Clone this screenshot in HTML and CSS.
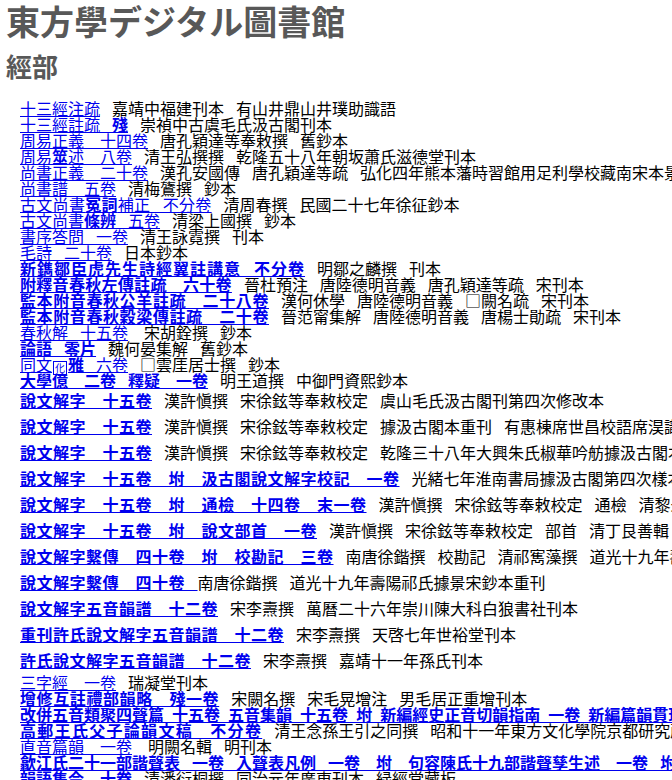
FILE: index.html
```html
<!DOCTYPE html>
<html lang="ja">
<head>
<meta charset="utf-8">
<title>東方學デジタル圖書館</title>
<link rel="stylesheet" href="styles.css">
</head>
<body>
<h1 class="site-title">東方學デジタル圖書館</h1>
<h2 class="section-title">經部</h2>
<div class="book-list">
  <div class="book"><a href="#">十三經注疏</a> <span class="note">嘉靖中福建刊本 有山井鼎山井璞助識語</span></div>
  <div class="book"><a href="#">十三經註疏 <span class="fb">殘</span></a> <span class="note">崇禎中古虞毛氏汲古閣刊本</span></div>
  <div class="book"><a href="#">周易正義　十四卷</a> <span class="note">唐孔穎達等奉敕撰 舊鈔本</span></div>
  <div class="book"><a href="#">周易<span class="fb">筮</span>述　八卷</a> <span class="note">清王弘撰撰 乾隆五十八年朝坂蕭氏滋德堂刊本</span></div>
  <div class="book"><a href="#">尚書正義　二十卷</a> <span class="note">漢孔安國傳 唐孔穎達等疏 弘化四年熊本藩時習館用足利學校藏南宋本景刊</span></div>
  <div class="book"><a href="#">尚書譜　五卷</a> <span class="note">清梅鷟撰 鈔本</span></div>
  <div class="book"><a href="#" class="ls-q">古文尚書<span class="fb">冤詞</span>補正 不分卷</a> <span class="note">清周春撰 民國二十七年徐征鈔本</span></div>
  <div class="book"><a href="#">古文尚書<span class="fb">條辨</span> 五卷</a> <span class="note">清梁上國撰 鈔本</span></div>
  <div class="book"><a href="#">書序答問 一卷</a> <span class="note">清王詠霓撰 刊本</span></div>
  <div class="book"><a href="#">毛詩 二十卷</a> <span class="note">日本鈔本</span></div>
  <div class="book"><a href="#" class="heavy ls-1">新鐫鄒臣虎先生詩經翼註講意 不分卷</a> <span class="note">明鄒之麟撰 刊本</span></div>
  <div class="book"><a href="#" class="heavy ls-q">附釋音春秋左傳註疏　六十卷</a> <span class="note">晉杜預注 唐陸德明音義 唐孔穎達等疏 宋刊本</span></div>
  <div class="book"><a href="#" class="heavy ls-h">監本附音春秋公羊註疏　二十八卷</a> <span class="note">漢何休學 唐陸德明音義 □闕名疏 宋刊本</span></div>
  <div class="book"><a href="#" class="heavy ls-h">監本附音春秋穀梁傳註疏　二十卷</a> <span class="note">晉范甯集解 唐陸德明音義 唐楊士勛疏 宋刊本</span></div>
  <div class="book"><a href="#">春秋解 十五卷</a>　<span class="note">宋胡銓撰 鈔本</span></div>
  <div class="book"><a href="#" class="heavy">論語 零片</a> <span class="note">魏何晏集解 舊鈔本</span></div>
  <div class="book"><a href="#">同文<span class="boxed">化</span><span class="fb">雅</span> 六卷</a> <span class="note">□雲厓居士撰 鈔本</span></div>
  <div class="book"><a href="#" class="heavy">大學億　二卷 釋疑　一卷</a> <span class="note">明王道撰 中御門資熙鈔本</span></div>

  <div class="book tall"><a href="#">說文解字　十五卷</a> <span class="note">漢許愼撰 宋徐鉉等奉敕校定 虞山毛氏汲古閣刊第四次修改本</span></div>
  <div class="book tall"><a href="#">說文解字　十五卷</a> <span class="note">漢許愼撰 宋徐鉉等奉敕校定 據汲古閣本重刊 有惠棟席世昌校語席淏識語</span></div>
  <div class="book tall"><a href="#">說文解字　十五卷</a> <span class="note">漢許愼撰 宋徐鉉等奉敕校定 乾隆三十八年大興朱氏椒華吟舫據汲古閣本重刊</span></div>
  <div class="book tall"><a href="#">說文解字　十五卷　坿　汲古閣說文解字校記　一卷</a> <span class="note">光緒七年淮南書局據汲古閣第四次樣本重刊</span></div>
  <div class="book tall"><a href="#">說文解字　十五卷　坿　通檢　十四卷　末一卷</a> <span class="note">漢許愼撰 宋徐鉉等奉敕校定 通檢 清黎永椿撰</span></div>
  <div class="book tall"><a href="#">說文解字　十五卷　坿　說文部首　一卷</a> <span class="note">漢許愼撰 宋徐鉉等奉敕校定 部首 清丁艮善輯 光緒</span></div>
  <div class="book tall"><a href="#">說文解字繫傳　四十卷　坿　校勘記　三卷</a> <span class="note">南唐徐鍇撰 校勘記 清祁寯藻撰 道光十九年壽陽祁氏刊本</span></div>
  <div class="book tall"><a href="#">說文解字繫傳　四十卷 </a><span class="note">南唐徐鍇撰 道光十九年壽陽祁氏據景宋鈔本重刊</span></div>
  <div class="book tall"><a href="#">說文解字五音韻譜　十二卷</a> <span class="note">宋李燾撰 萬曆二十六年崇川陳大科白狼書社刊本</span></div>
  <div class="book tall"><a href="#">重刊許氏說文解字五音韻譜　十二卷</a> <span class="note">宋李燾撰 天啓七年世裕堂刊本</span></div>
  <div class="book tall"><a href="#">許氏說文解字五音韻譜　十二卷</a> <span class="note">宋李燾撰 嘉靖十一年孫氏刊本</span></div>

  <div class="book"><a href="#">三字經　一卷</a> <span class="note">瑞凝堂刊本</span></div>
  <div class="book"><a href="#" class="heavy ls-h">增修互註禮部韻略　殘一卷</a> <span class="note">宋闕名撰 宋毛晃增注 男毛居正重增刊本</span></div>
  <div class="book tight"><a href="#" class="heavy">改併五音類聚四聲篇 十五卷 五音集韻 十五卷 坿 新編經史正音切韻指南 一卷 新編篇韻貫珠集 八卷</a></div>
  <div class="book"><a href="#" class="heavy ls-w">高郵王氏父子論韻文稿　不分卷</a> <span class="note">清王念孫王引之同撰 昭和十一年東方文化學院京都研究所影印本</span></div>
  <div class="book"><a href="#">直音篇韻　一卷</a>　<span class="note">明闕名輯 明刊本</span></div>
  <div class="book"><a href="#" class="heavy">歙江氏二十一部諧聲表 一卷 入聲表凡例 一卷　坿　句容陳氏十九部諧聲孳生述　一卷 坿 四聲切韻表　一卷</a></div>
  <div class="book"><a href="#" class="heavy">韻語集令　十卷</a> <span class="note">清潘衍桐撰 同治元年廣東刊本 緑經堂藏板</span></div>
</div>
</body>
</html>
```

FILE: styles.css
```css
html, body {
  margin: 0;
  padding: 0;
  overflow: hidden;
  background: #ffffff;
}

body {
  width: 672px;
  height: 780px;
  font-family: "Noto Sans CJK JP", "Noto Sans CJK SC", sans-serif;
  color: #000000;
}

.site-title {
  margin: 4px 0 0 6px;
  font-size: 34px;
  line-height: 34px;
  font-weight: 700;
  color: #585858;
  white-space: nowrap;
}

.section-title {
  margin: 15px 0 0 6px;
  font-size: 26px;
  line-height: 26px;
  font-weight: 700;
  color: #585858;
}

.book-list {
  margin-top: 21px;
  padding-left: 20px;
}

.book {
  height: 16px;
  font-size: 16px;
  line-height: 16px;
  white-space: nowrap;
  word-spacing: 8.4px;
}

.book a {
  color: #0000ee;
  text-decoration: underline;
  text-decoration-thickness: 1px;
  text-underline-offset: 1px;
}

.book.tall {
  height: 26px;
  padding-top: 4px;
  box-sizing: border-box;
}

.book.tall a {
  font-weight: 700;
  letter-spacing: 0.5px;
}

.book.tight {
  word-spacing: 4.4px;
}

.heavy {
  font-weight: 700;
}

.fb {
  font-weight: 700;
}

.ls-q { letter-spacing: 0.3px; }
.ls-h { letter-spacing: 0.6px; }
.ls-1 { letter-spacing: 1px; }
.ls-w { letter-spacing: 1.3px; }

.boxed {
  display: inline-block;
  box-sizing: border-box;
  width: 14px;
  height: 14px;
  margin: 0 1px;
  border: 1px solid currentColor;
  font-size: 10px;
  line-height: 12px;
  text-align: center;
  vertical-align: -1px;
  letter-spacing: 0;
}
```
